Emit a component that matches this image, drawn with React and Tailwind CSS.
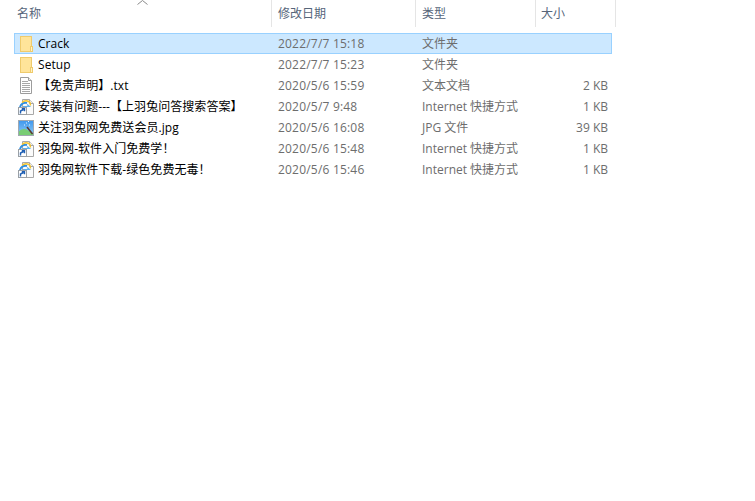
const FONT = "font-['Open_Sans','Noto_Sans_CJK_SC',sans-serif]"

const FolderIcon = () => (
  <svg width="16" height="18" viewBox="0 0 16 18" className="shrink-0">
    <rect x="2.5" y="1.5" width="11" height="15" fill="#ffe49a" stroke="#efcb6c" />
    <rect x="12.5" y="11.5" width="2" height="5" fill="#fff3c8" stroke="#efcb6c" />
  </svg>
)

const TextIcon = () => (
  <svg width="16" height="18" viewBox="0 0 16 18" className="shrink-0">
    <path d="M2.5 0.5H10.5L13.5 3.5V16.5H2.5Z" fill="#fff" stroke="#9c9c9c" />
    <path d="M10.5 0.5V3.5H13.5" fill="#eee" stroke="#9c9c9c" />
    <path d="M4 4.5H10M4 6.5H12M4 8.5H12M4 10.5H12M4 12.5H12M4 14.5H12" stroke="#a8a8a8" />
  </svg>
)

const LinkIcon = () => (
  <svg width="16" height="16" viewBox="0 0 16 16" className="shrink-0">
    <path d="M4.5 0.5H11.5L15.5 4.5V15.5H4.5Z" fill="#fbfbfb" stroke="#a8a8a8" />
    <path d="M11.5 0.5V4.5H15.5" fill="#eee" stroke="#a8a8a8" />
    <path d="M2 8C3 4.5 6 3 9 4" fill="none" stroke="#2f8fe0" strokeWidth="2" />
    <path d="M4 3.5C6 1.2 10 1 12 3.5L12.5 6.5" fill="none" stroke="#f4c430" strokeWidth="1.4" />
    <path d="M9 5.5L11.5 7.5H5" fill="none" stroke="#5fb0ea" strokeWidth="1.2" />
    <rect x="0.5" y="8.5" width="8" height="7" fill="#fff" stroke="#9aa0a6" />
    <path d="M2.5 14.5V12L5.5 10.5M3.8 9.8H6.5V12.2" fill="none" stroke="#1f5fb4" strokeWidth="1.4" />
  </svg>
)

const ImageIcon = () => (
  <svg width="16" height="16" viewBox="0 0 16 16" className="shrink-0">
    <defs>
      <linearGradient id="sky" x1="0" y1="0" x2="0" y2="1">
        <stop offset="0" stopColor="#3f97ee" />
        <stop offset="1" stopColor="#8fcbf5" />
      </linearGradient>
    </defs>
    <rect x="0.5" y="0.5" width="15" height="15" fill="url(#sky)" stroke="#a0a8b0" />
    <path d="M1 11.5C4 8.5 7 8.5 10 10.5L15 13V15H1Z" fill="#79cd74" />
    <path d="M9 7L14.5 14" stroke="#5a3a32" strokeWidth="1.6" />
    <path d="M8 3H9M11 5H12M6 5H7M10 1.5H11" stroke="#e3f3ff" />
  </svg>
)

const columns = [
  { label: '名称', cls: 'w-[272px] pl-[17px]' },
  { label: '修改日期', cls: 'w-[144px] pl-[6px]' },
  { label: '类型', cls: 'w-[120px] pl-[6px]' },
  { label: '大小', cls: 'w-[80px] pl-[5px]' },
]

const files = [
  { name: 'Crack', date: '2022/7/7 15:18', type: '文件夹', size: '', icon: FolderIcon, selected: true },
  { name: 'Setup', date: '2022/7/7 15:23', type: '文件夹', size: '', icon: FolderIcon },
  { name: '【免责声明】.txt', date: '2020/5/6 15:59', type: '文本文档', size: '2 KB', icon: TextIcon },
  { name: '安装有问题---【上羽兔问答搜索答案】', date: '2020/5/7 9:48', type: 'Internet 快捷方式', size: '1 KB', icon: LinkIcon },
  { name: '关注羽兔网免费送会员.jpg', date: '2020/5/6 16:08', type: 'JPG 文件', size: '39 KB', icon: ImageIcon },
  { name: '羽兔网-软件入门免费学！', date: '2020/5/6 15:48', type: 'Internet 快捷方式', size: '1 KB', icon: LinkIcon },
  { name: '羽兔网软件下载-绿色免费无毒！', date: '2020/5/6 15:46', type: 'Internet 快捷方式', size: '1 KB', icon: LinkIcon },
]

export default function App() {
  return (
    <div className={`${FONT} w-[755px] h-[501px] bg-white text-[12px] overflow-hidden`}>
      {/* Column headers */}
      <div className="relative flex h-[27px]">
        {columns.map((col) => (
          <div key={col.label} className={`${col.cls} h-full border-r border-[#e5e5e5] flex items-center text-[#56657a]`}>
            {col.label}
          </div>
        ))}
        <svg width="11" height="5" viewBox="0 0 11 5" className="absolute left-[137px] top-0">
          <path d="M0.5 4.5L5.5 0.5L10.5 4.5" fill="none" stroke="#8a8a8a" />
        </svg>
      </div>

      {/* File rows */}
      <div className="pt-[6px] pl-[14px]">
        {files.map((file) => {
          const Icon = file.icon
          return (
            <div
              key={file.name}
              className={`flex items-center h-[21px] w-[598px] border ${file.selected ? 'bg-[#cce8ff] border-[#99d1ff]' : 'border-transparent'}`}
            >
              <div className="w-[256px] pl-[3px] flex items-center gap-[4px] text-black whitespace-nowrap">
                <Icon />
                <span className="tracking-[0.05px]">{file.name}</span>
              </div>
              <div className="w-[144px] pl-[7px] text-[#6d6d6d] tracking-[0.2px]">{file.date}</div>
              <div className="w-[120px] pl-[7px] text-[#6d6d6d]">{file.type}</div>
              <div className="w-[73px] text-right text-[#6d6d6d]">{file.size}</div>
            </div>
          )
        })}
      </div>
    </div>
  )
}
